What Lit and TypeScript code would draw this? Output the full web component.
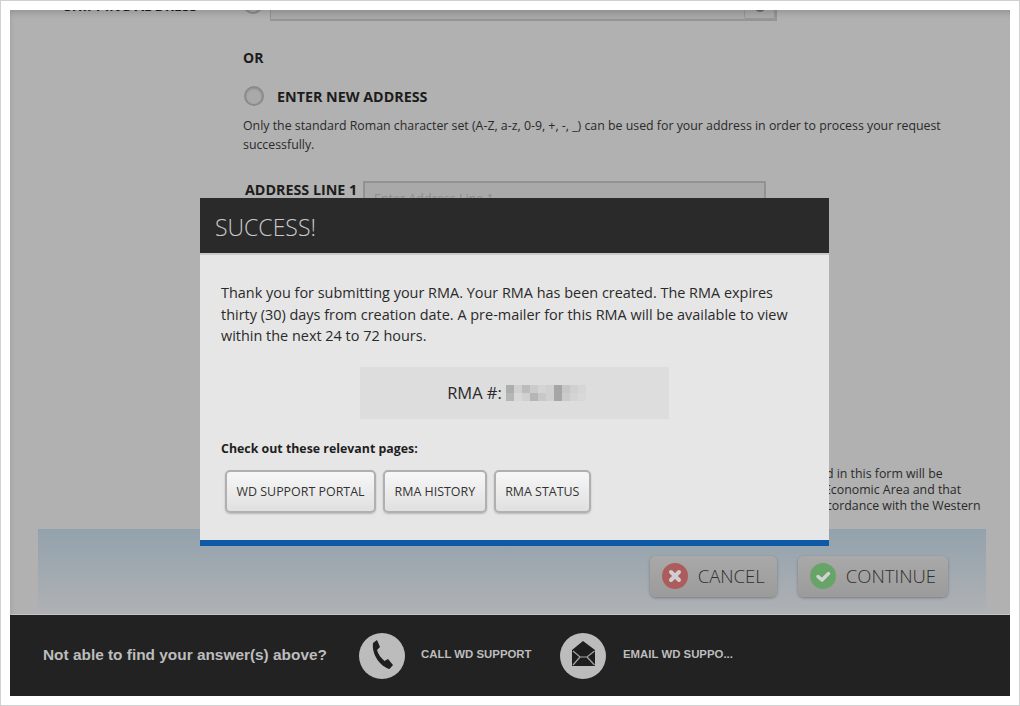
import { LitElement, html, css } from "lit";
import { customElement } from "lit/decorators.js";

const BLUR_ROWS = [
  ["#adadad", "#d0d0d0", "#bcbcbc", "#cbcbcb", "#d4d4d4", "#d0d0d0", "#a6a6a6", "#c6c6c6", "#d0d0d0", "#d6d6d6"],
  ["#b6b6b6", "#d8d8d8", "#d0d0d0", "#b6b6b6", "#c8c8c8", "#d0d0d0", "#a6a6a6", "#cbcbcb", "#d4d4d4", "#d8d8d8"],
];

@customElement("app-root")
export class AppRoot extends LitElement {
  static styles = css`
    :host {
      display: block;
      width: 1020px;
      height: 706px;
      box-sizing: border-box;
      padding: 9px;
      background: #fff;
      border: 1px solid #d0d0d0;
      font-family: "Open Sans", "Liberation Sans", sans-serif;
      color: #1c1c1c;
    }
    .screen {
      position: relative;
      width: 1000px;
      height: 686px;
      overflow: hidden;
      display: flex;
      flex-direction: column;
      background: #b1b1b1;
    }
    .screen::before {
      content: "";
      position: absolute;
      inset: 0 0 80px 0;
      box-shadow: inset 2px 6px 6px -3px rgba(0, 0, 0, 0.16);
      pointer-events: none;
    }
    .form {
      flex: 1;
      padding-left: 233px;
    }
    .ship-row {
      display: flex;
      height: 41px;
      margin: -30px 0 0 -179px;
    }
    .ship-label {
      width: 179px;
      margin-top: 16px;
      font-size: 14px;
      line-height: 20px;
      font-weight: 700;
      white-space: nowrap;
    }
    .ship-row .radio {
      margin-top: 14px;
    }
    .select {
      display: flex;
      justify-content: flex-end;
      box-sizing: border-box;
      width: 507px;
      height: 41px;
      margin-left: 7px;
      background: #a8a8a8;
      border: 1px solid #949494;
      border-width: 1px 2px 2px 1px;
    }
    .select-btn {
      display: flex;
      justify-content: center;
      align-items: flex-end;
      width: 31px;
      height: 38px;
      background: #aaaaaa;
      border: 1px solid #979797;
      border-radius: 2px;
      box-sizing: border-box;
    }
    .select-btn i {
      display: block;
      width: 12px;
      height: 12px;
      margin-bottom: 6px;
      border-radius: 50%;
      background: #6f6f6f;
    }
    .or {
      margin-top: 27px;
      font-size: 14px;
      line-height: 20px;
      font-weight: 700;
    }
    .new-row {
      display: flex;
      align-items: center;
      height: 22px;
      margin-top: 17px;
      font-size: 14.3px;
      font-weight: 700;
    }
    .new-row .radio {
      margin: 0 13px 0 1px;
    }
    .radio {
      flex: none;
      box-sizing: border-box;
      width: 20px;
      height: 20px;
      border-radius: 50%;
      border: 2px solid #8b8b8b;
      background: #a9a9a9;
      box-shadow: inset 0 1px 2px rgba(0, 0, 0, 0.15);
    }
    .hint {
      width: 716px;
      margin: 9px 0 0;
      font-size: 12.35px;
      line-height: 19px;
      color: #2a2a2a;
    }
    .addr-row {
      display: flex;
      height: 40px;
      margin: 27px 0 0 2px;
    }
    .addr-label {
      width: 118px;
      font-size: 14.3px;
      line-height: 17px;
      font-weight: 700;
      white-space: nowrap;
    }
    .addr-input {
      box-sizing: border-box;
      width: 403px;
      height: 40px;
      padding: 7px 9px;
      background: #a9a9a9;
      border: 1px solid #929292;
      border-width: 2px 2px 1px 2px;
      font-size: 12.5px;
      color: #8c8c8c;
    }
    .note {
      margin: 245px 0 0 576px;
      font-size: 12.35px;
      line-height: 16px;
      white-space: nowrap;
      color: #2a2a2a;
    }
    .note span {
      display: block;
    }
    .note .line-two {
      margin-left: 5px;
    }
    .note .line-three {
      margin-left: 1px;
    }
    .band {
      display: flex;
      justify-content: flex-end;
      gap: 21px;
      box-sizing: border-box;
      height: 85px;
      margin: 0 24px 0 28px;
      padding: 27px 38px 0 0;
      background: linear-gradient(#93a2ad, #afb1b4);
    }
    .action {
      display: flex;
      align-items: center;
      gap: 10px;
      box-sizing: border-box;
      height: 41px;
      padding: 0 12px 2px;
      border-radius: 6px;
      background: linear-gradient(#a9a9a9, #9b9b9b);
      box-shadow: 0 1px 3px rgba(0, 0, 0, 0.3);
      font-size: 18.5px;
      font-weight: 300;
      color: #2f2f2f;
    }
    .action svg {
      display: block;
      flex: none;
    }
    .help {
      display: flex;
      align-items: center;
      box-sizing: border-box;
      height: 82px;
      padding: 0 0 0 33px;
      background: #222222;
      border-top: 1px solid #c6c6c6;
      font-family: "Liberation Sans", Arial, sans-serif;
      font-weight: 700;
      color: #bdbdbd;
    }
    .help-title {
      width: 316px;
      font-size: 15.4px;
      margin-top: -2px;
    }
    .help-circle {
      flex: none;
      display: block;
      width: 46px;
      height: 46px;
    }
    .help-link {
      margin: -4px 0 0 16px;
      width: 139px;
      font-size: 11.4px;
      white-space: nowrap;
    }
    .help-link.mail {
      margin-left: 17px;
    }
    .modal {
      position: absolute;
      left: 190px;
      top: 188px;
      box-sizing: border-box;
      width: 629px;
      height: 348px;
      background: #e6e6e6;
      border-bottom: 6px solid #0d5aa7;
    }
    .modal-head {
      box-sizing: border-box;
      height: 57px;
      padding-left: 15px;
      background: #2a2a2a;
      border-bottom: 2px solid #c9c9c9;
      font-size: 23px;
      font-weight: 300;
      line-height: 58px;
      color: #cacaca;
    }
    .modal-body {
      padding: 27px 21px 0;
    }
    .modal-text {
      margin: 0;
      font-size: 14.45px;
      line-height: 21.5px;
      color: #2a2a2a;
    }
    .rma {
      display: flex;
      justify-content: center;
      align-items: center;
      gap: 4px;
      box-sizing: border-box;
      width: 309px;
      height: 52px;
      margin: 20px auto 0;
      padding-left: 4px;
      background: #dddddd;
      font-size: 16.5px;
      color: #2a2a2a;
    }
    .blur {
      display: grid;
      grid-template-columns: repeat(10, 8px);
      grid-auto-rows: 8px;
      filter: blur(0.6px);
    }
    .check {
      margin-top: 21px;
      font-size: 12.37px;
      line-height: 18px;
      font-weight: 700;
      color: #1e1e1e;
    }
    .links {
      display: flex;
      gap: 7px;
      margin: 12px 0 0 4px;
    }
    .link {
      box-sizing: border-box;
      height: 43px;
      padding: 0 9.5px;
      display: flex;
      align-items: center;
      border: 2px solid #b0b0b0;
      border-radius: 5px;
      background: linear-gradient(#f7f7f7, #e0e0e0);
      box-shadow: 0 1px 2px rgba(0, 0, 0, 0.2);
      font-size: 12.45px;
      color: #333;
      white-space: nowrap;
    }
  `;

  render() {
    return html`
      <div class="screen">
        <div class="form">
          <div class="ship-row">
            <div class="ship-label">SHIPPING ADDRESS</div>
            <div class="radio"></div>
            <div class="select"><div class="select-btn"><i></i></div></div>
          </div>
          <div class="or">OR</div>
          <div class="new-row"><div class="radio"></div>ENTER NEW ADDRESS</div>
          <p class="hint">
            Only the standard Roman character set (A-Z, a-z, 0-9, +, -, _) can be used for your address in order to process your request successfully.
          </p>
          <div class="addr-row">
            <div class="addr-label">ADDRESS LINE 1</div>
            <div class="addr-input">Enter Address Line 1</div>
          </div>
          <div class="note">
            <span>ed in this form will be</span>
            <span class="line-two">Economic Area and that</span>
            <span class="line-three">ccordance with the Western</span>
          </div>
        </div>

        <div class="band">
          <div class="action">
            <svg width="26" height="26" viewBox="0 0 26 26">
              <circle cx="13" cy="13" r="13" fill="#ad5c5e" />
              <path d="M9 9l8 8M17 9l-8 8" stroke="#cfcfcf" stroke-width="4" stroke-linecap="round" />
            </svg>
            CANCEL
          </div>
          <div class="action">
            <svg width="26" height="26" viewBox="0 0 26 26">
              <circle cx="13" cy="13" r="13" fill="#67a468" />
              <path d="M8 13.5l4 3.5 6.500-6.500" fill="none" stroke="#d2d2d2" stroke-width="3.500" stroke-linecap="round" stroke-linejoin="round" />
            </svg>
            CONTINUE
          </div>
        </div>

        <div class="help">
          <div class="help-title">Not able to find your answer(s) above?</div>
          <svg class="help-circle" viewBox="0 0 46 46">
            <circle cx="23" cy="23" r="23" fill="#bcbcbc" />
            <path d="M14 10 L18 7 L21 14 L18 17 C19 21 22 25 25.500 28 L29 26 L34 32 L30.500 36 C21 33.500 12.500 21 14 10 Z" fill="#1e1e1e" />
          </svg>
          <div class="help-link">CALL WD SUPPORT</div>
          <svg class="help-circle" viewBox="0 0 46 46">
            <circle cx="23" cy="23" r="23" fill="#bcbcbc" />
            <path d="M23 8 L35 17 V33 H12 V17 Z" fill="#1e1e1e" />
            <path d="M13 18 L20 24 H27 L34.500 18 M13 32 L20 24 M34.500 32 L27 24" fill="none" stroke="#a5a5a5" stroke-width="1.200" />
          </svg>
          <div class="help-link mail">EMAIL WD SUPPO...</div>
        </div>

        <div class="modal">
          <div class="modal-head">SUCCESS!</div>
          <div class="modal-body">
            <p class="modal-text">
              Thank you for submitting your RMA. Your RMA has been created. The RMA expires thirty (30) days from creation date. A pre-mailer for this RMA will be available to view within the next 24 to 72 hours.
            </p>
            <div class="rma">
              RMA #:
              <div class="blur">
                ${BLUR_ROWS.flat().map((c) => html`<i style="background:${c}"></i>`)}
              </div>
            </div>
            <div class="check">Check out these relevant pages:</div>
            <div class="links">
              <div class="link">WD SUPPORT PORTAL</div>
              <div class="link">RMA HISTORY</div>
              <div class="link">RMA STATUS</div>
            </div>
          </div>
        </div>
      </div>
    `;
  }
}
